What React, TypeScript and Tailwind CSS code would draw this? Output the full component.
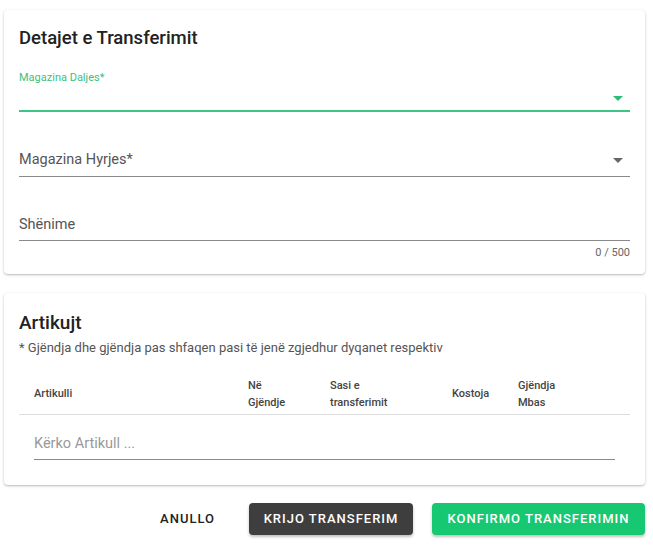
function Arrow({ color }: { color: string }) {
    return (
        <svg width="10" height="5" viewBox="0 0 10 5" className="shrink-0">
            <path d="M0 0 L10 0 L5 5 Z" fill={color} />
        </svg>
    )
}

export default function App() {
    return (
        <main className="bg-white min-h-[553px] w-[653px] px-[4px] pt-[10px] font-['Roboto',sans-serif] text-[#222]">
            <section className="bg-white rounded-[4px] shadow-[0_1px_3px_rgba(0,0,0,0.22),0_1px_1px_rgba(0,0,0,0.08)] px-[15px] pt-[18px] pb-[14px] w-[641px]">
                <h1 className="text-[18.5px] font-medium leading-[20px] text-[#222]">Detajet e Transferimit</h1>

                <div className="mt-[23px]">
                    <label className="block text-[11px] leading-[14px] text-[#3ebf7f]">Magazina Daljes*</label>
                    <div className="flex items-center justify-end h-[25px] pr-[7px] pt-[2px]">
                        <Arrow color="#2ebd76" />
                    </div>
                    <div className="h-[2px] bg-[#3cc585]" />
                </div>

                <div className="mt-[39px] flex items-center justify-between pb-[7px] border-b border-[#8a8a8a] pr-[7px]">
                    <span className="text-[14.5px] leading-[18px] text-[#555]">Magazina Hyrjes*</span>
                    <Arrow color="#666" />
                </div>

                <div className="mt-[39px] pb-[6px] border-b border-[#8a8a8a] text-[14.5px] leading-[18px] text-[#555]">
                    Shënime
                </div>
                <div className="text-right text-[11px] leading-[14px] text-[#666] mt-[5px]">0 / 500</div>
            </section>

            <section className="mt-[19px] bg-white rounded-[4px] shadow-[0_1px_3px_rgba(0,0,0,0.22),0_1px_1px_rgba(0,0,0,0.08)] px-[15px] pt-[20px] pb-[25px] w-[641px]">
                <h2 className="text-[19px] font-medium leading-[20px] text-[#222]">Artikujt</h2>
                <p className="mt-[7px] text-[13px] leading-[15px] text-[#555]">* Gjëndja dhe gjëndja pas shfaqen pasi të jenë zgjedhur dyqanet respektiv</p>

                <div className="mt-[18px] grid grid-cols-[229px_82px_122px_66px_1fr] items-center h-[42px] border-b border-[#ddd] text-[11px] leading-[17px] font-medium text-[#444]">
                    <div className="pl-[15px]">Artikulli</div>
                    <div>Në<br />Gjëndje</div>
                    <div>Sasi e<br />transferimit</div>
                    <div>Kostoja</div>
                    <div>Gjëndja<br />Mbas</div>
                </div>

                <div className="mx-[15px] mt-[20px] pb-[6px] border-b border-[#8a8a8a] text-[14.5px] leading-[18px] text-[#999]">
                    Kërko Artikull ...
                </div>
            </section>

            <div className="mt-[18px] pr-[4px] flex justify-end items-center gap-[19px]">
                <button className="h-[32px] px-[15px] text-[13px] font-medium tracking-[1px] text-[#222]">ANULLO</button>
                <button className="h-[32px] w-[164px] rounded-[4px] bg-[#3e3e3e] text-white text-[13px] font-medium tracking-[1px] shadow-[0_2px_3px_rgba(0,0,0,0.25)]">KRIJO TRANSFERIM</button>
                <button className="h-[32px] w-[213px] rounded-[4px] bg-[#17c872] text-white text-[13px] font-medium tracking-[1px] shadow-[0_2px_3px_rgba(0,0,0,0.25)]">KONFIRMO TRANSFERIMIN</button>
            </div>
        </main>
    )
}
